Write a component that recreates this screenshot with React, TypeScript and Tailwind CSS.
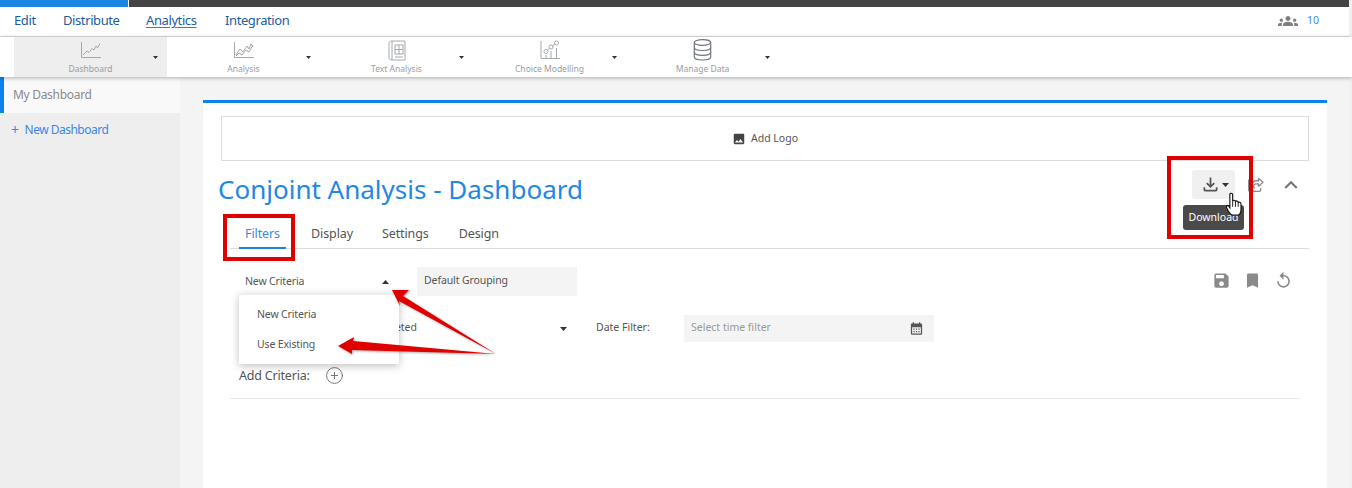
import React from "react";
import { MdSave, MdBookmark, MdReplay, MdImage, MdGroups, MdOutlineFileDownload, MdKeyboardArrowUp, MdCalendarMonth } from "react-icons/md";
import { FaRegShareFromSquare } from "react-icons/fa6";
import { CirclePlus } from "lucide-react";

const Caret = ({ up = false, className = "" }: { up?: boolean; className?: string }) => (
  <svg width="7" height="4" viewBox="0 0 8 4" preserveAspectRatio="none" className={className}>
    <path d={up ? "M0 4 L4 0 L8 4 Z" : "M0 0 L8 0 L4 4 Z"} fill="#333" />
  </svg>
);

const stroke = { fill: "none", stroke: "#a4a9b0", strokeWidth: 1 };

const LineIcon = () => (
  <svg width="22" height="18" viewBox="0 0 22 18" {...stroke}>
    <path d="M1.5 1 V16.5 H21" />
    <path d="M3 14 L7 10 L9 11.5 L12 7.5 L14 9 L16 5 L17.5 7 L20 2.5" />
  </svg>
);
const AnalysisIcon = () => (
  <svg width="22" height="18" viewBox="0 0 22 18" {...stroke}>
    <path d="M1.5 1 V16.5 H21" />
    <path d="M3 14 L7 8 L10 11 L14 5 L16 8 L18 3 L20 6" />
    <path d="M3 15 L6 12 L9 14 L13 9 L16 11 L20 4" />
  </svg>
);
const BookIcon = () => (
  <svg width="18" height="21" viewBox="0 0 18 21" {...stroke}>
    <path d="M1 2.5 C3 0.5 4 1 5 1 H17 V20 H5 C3.5 20 2 20 1 18.5 Z" />
    <path d="M4 1 V20" />
    <rect x="7" y="5" width="8" height="9" />
    <path d="M7 9.5 H15 M11 5 V14 M7 17 H15" />
  </svg>
);
const ChoiceIcon = () => (
  <svg width="20" height="20" viewBox="0 0 20 20" {...stroke}>
    <path d="M1 1 V18.5 H20" />
    <circle cx="6" cy="11.5" r="2" />
    <circle cx="11" cy="7" r="2" />
    <circle cx="16.5" cy="3" r="2" />
    <path d="M7.5 10 L9.5 8.5 M12.5 6 L15 4 M6 15 V18 M11 11 V18 M16.5 8 V18" />
  </svg>
);
const DbIcon = () => (
  <svg width="19" height="22" viewBox="0 0 19 22" fill="none" stroke="#6f7680" strokeWidth="1.2">
    <ellipse cx="9.5" cy="3.5" rx="8.2" ry="2.8" />
    <path d="M1.3 3.5 V18 C1.3 19.8 5 21 9.5 21 C14 21 17.7 19.8 17.7 18 V3.5" />
    <path d="M1.3 8.5 C1.3 10.3 5 11.5 9.5 11.5 C14 11.5 17.7 10.3 17.7 8.5" />
    <path d="M1.3 13.3 C1.3 15.1 5 16.3 9.5 16.3 C14 16.3 17.7 15.1 17.7 13.3" />
  </svg>
);

const tools = [
  { label: "Dashboard", icon: <LineIcon />, active: true },
  { label: "Analysis", icon: <AnalysisIcon /> },
  { label: "Text Analysis", icon: <BookIcon /> },
  { label: "Choice Modelling", icon: <ChoiceIcon /> },
  { label: "Manage Data", icon: <DbIcon /> },
];

const font = "font-['Noto_Sans',sans-serif]";

export default function App() {
  return (
    <div className={`relative flex h-[488px] w-[1352px] flex-col overflow-hidden bg-[#f4f4f4] ${font} text-[#555]`}>
      {/* top strip */}
      <div className="flex h-[7px] shrink-0 bg-white">
        <div className="w-[128px] bg-[#1a86e2]" />
        <div className="ml-px flex-1 bg-[#444444]" />
      </div>
      {/* nav */}
      <div className="flex h-[30px] shrink-0 items-center border-b border-[#dcdcdc] bg-white pb-px pl-[14px] pr-[33px] text-[13px] tracking-[-0.4px] text-[#1d5c9e]">
        <span className="w-[49px]">Edit</span>
        <span className="w-[83px]">Distribute</span>
        <span className="w-[79px] underline decoration-[#1a86e2] underline-offset-2">Analytics</span>
        <span>Integration</span>
        <div className="ml-auto flex items-center gap-[9px] text-[10.5px] tracking-normal text-[#3b86e8]">
          <MdGroups size={20} color="#808080" />
          <span>10</span>
        </div>
      </div>
      {/* toolbar */}
      <div className="z-10 flex h-[40px] shrink-0 bg-white pl-[14px] shadow-[0_1px_4px_rgba(0,0,0,0.3)]">
        {tools.map((t) => (
          <div key={t.label} className={`relative flex h-[40px] w-[153px] flex-col items-center ${t.active ? "bg-[#eeeeee]" : ""}`}>
            <div className="flex h-[26px] items-center justify-center">{t.icon}</div>
            <span className="text-[8.5px] leading-[11px] text-[#989da3]">{t.label}</span>
            <Caret className="absolute right-[9px] top-[19px] h-[3px] w-[5px]" />
          </div>
        ))}
      </div>
      {/* body */}
      <div className="flex min-h-0 flex-1">
        <aside className="w-[180px] shrink-0 bg-[#eeeeee]">
          <div className="flex h-[36px] items-center border-l-4 border-[#0a84ea] bg-[#f9f9f9] pl-[9px] text-[12px] tracking-[-0.3px] text-[#8a8a8a]">My Dashboard</div>
          <div className="flex h-[34px] items-center pl-[11px] text-[12px] tracking-[-0.5px] text-[#3b86e8]">
            <span className="mr-[6px] text-[14px] leading-none">+</span>New Dashboard
          </div>
        </aside>
        <main className="ml-[23px] mr-[25px] mt-[23px] flex-1 border-t-[3px] border-[#0a84ea] bg-white pl-[18px] pr-[18px] pt-[13px]">
          <div className="flex h-[45px] items-center justify-center gap-[5px] border border-[#dcdcdc] text-[10.5px] text-[#555]">
            <MdImage size={14} color="#444" />
            Add Logo
          </div>
          {/* title row */}
          <div className="flex h-[59px] items-start">
            <h1 className="-ml-[3px] mt-[10px] text-[26px] leading-[36px] text-[#1f87e6]">Conjoint Analysis - Dashboard</h1>
            <div className="ml-auto mr-[5px] mt-[9px] flex items-center">
              <div className="flex h-[29px] w-[43px] items-center justify-center gap-px rounded-[3px] bg-[#f0f0f0] pl-[2px]">
                <MdOutlineFileDownload size={21} color="#555" />
                <Caret />
              </div>
              <FaRegShareFromSquare size={16} color="#8a8a8a" className="ml-[13px]" />
              <MdKeyboardArrowUp size={26} color="#777" className="ml-[14px]" />
            </div>
          </div>
          {/* tabs */}
          <div className="ml-[9px] flex h-[29px] items-start border-b border-[#dcdcdc] text-[12.5px] tracking-[-0.1px]">
            <div className="ml-[9px] h-[29px] w-[47px] border-b-2 border-[#1a86e2] pl-[6px] leading-[28px] text-[#3b86e8]">Filters</div>
            <span className="ml-[25px] leading-[28px]">Display</span>
            <span className="ml-[29px] leading-[28px]">Settings</span>
            <span className="ml-[30px] leading-[28px]">Design</span>
          </div>
          {/* row 1 */}
          <div className="mt-[18px] flex h-[29px] items-center">
            <div className="ml-[24px] flex w-[146px] items-center justify-between pr-[2px] text-[10.5px] tracking-[-0.15px]">
              New Criteria
              <Caret up />
            </div>
            <div className="ml-[26px] flex h-[29px] w-[160px] items-center bg-[#f4f4f4] pb-[2px] pl-[7px] text-[10.5px] tracking-[-0.1px]">Default Grouping</div>
            <div className="mb-[2px] ml-auto mr-[16px] flex items-center gap-[12px]">
              <MdSave size={19} color="#8a8a8a" />
              <MdBookmark size={19} color="#8a8a8a" />
              <MdReplay size={19} color="#8a8a8a" />
            </div>
          </div>
          {/* row 2 */}
          <div className="mt-[19px] flex h-[27px] items-center text-[10.5px]">
            <span className="w-[196px] pb-[2px] text-right">Completed</span>
            <Caret className="ml-[143px]" />
            <span className="ml-[29px] w-[88px] pb-[2px]">Date Filter:</span>
            <div className="flex h-[27px] w-[250px] items-center justify-between bg-[#f4f4f4] pl-[7px] pr-[10px] text-[#999]">
              <span className="pb-[2px]">Select time filter</span>
              <MdCalendarMonth size={15} color="#555" />
            </div>
          </div>
          {/* add criteria */}
          <div className="ml-[18px] mt-[24px] flex items-center text-[12.5px] leading-[19px] tracking-[-0.2px]">
            Add Criteria:
            <CirclePlus size={19} strokeWidth={1.1} color="#666" className="ml-[15px]" />
          </div>
          <div className="ml-[9px] mr-[9px] mt-[13px] border-b border-[#e8e8e8]" />
        </main>
      </div>
      <div className="absolute right-0 top-0 bottom-0 w-[3px] bg-[#f0f0f0]" />

      {/* dropdown menu */}
      <div className="absolute left-[239px] top-[294px] h-[70px] w-[160px] border-t border-[#ececec] bg-white pl-[18px] pt-[12px] text-[10.5px] leading-[14px] tracking-[-0.15px] shadow-[0_2px_8px_rgba(0,0,0,0.25)]">
        <div>New Criteria</div>
        <div className="mt-[16px]">Use Existing</div>
      </div>
      {/* tooltip */}
      <div className="absolute left-[1183px] top-[205px] flex h-[25px] w-[61px] items-center justify-center rounded-[3px] bg-[#4a4a4a] text-[10.5px] text-white">Download</div>
      {/* annotation boxes */}
      <div className="absolute left-[223px] top-[214px] h-[47px] w-[72px] border-4 border-[#e00000]" />
      <div className="absolute left-[1167px] top-[156px] h-[83px] w-[86px] border-4 border-[#e00000]" />
      {/* arrows */}
      <svg className="absolute left-0 top-0" width="1352" height="488" viewBox="0 0 1352 488">
        <g fill="#e00000" style={{ filter: "drop-shadow(1px 1px 1px rgba(0,0,0,0.35))" }}>
          <path d="M392 290 L409 290 L403 296 L496 354 L399 301 L400 306 Z" />
          <path d="M338 346 L354 337 L353 341 L496 354 L352 350 L352 354 Z" />
        </g>
      </svg>
      {/* hand cursor */}
      <svg className="absolute left-[1225px] top-[192px]" width="19" height="25" viewBox="0 0 20 27">
        <path d="M5 2.5 C5 1 8 1 8 2.5 V10 C8.5 8.5 11 8.5 11 10.5 C11.5 9 14 9.5 14 11.5 C14.5 10.5 17 11 17 13 V19 C17 22 15.5 25 13.5 25 H8 C6 25 5 23 3.5 21 L1.5 17 C0.5 15 3 14 4 15.5 L5 17 Z" fill="#fff" stroke="#111" strokeWidth="1.2" />
        <path d="M8 10 V16 M11 10.5 V16 M14 11.5 V16" stroke="#111" strokeWidth="1" fill="none" />
      </svg>
    </div>
  );
}
